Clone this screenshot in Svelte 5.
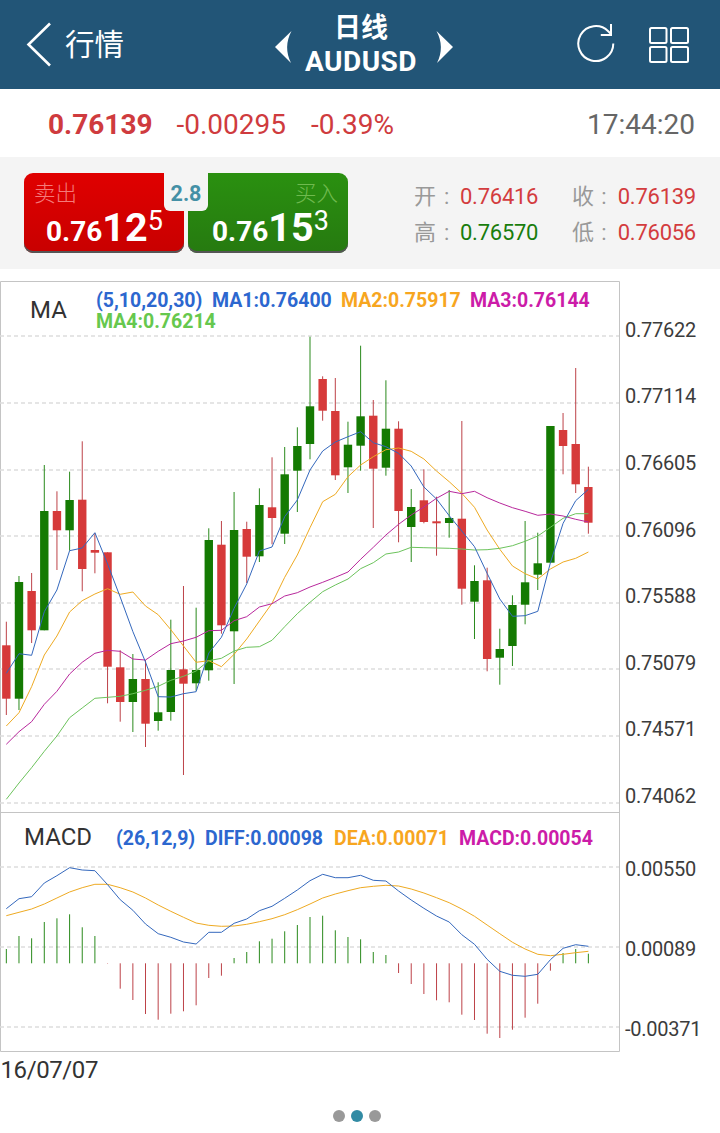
<script>
  const quotes = [
    { label: "开", value: "0.76416", up: false },
    { label: "收", value: "0.76139", up: false },
    { label: "高", value: "0.76570", up: true },
    { label: "低", value: "0.76056", up: false },
  ];

  // --- Chart geometry, y is counted from the top of the page
  const top = 281;
  const zero = 963.3;
  const xAt = (i) => 6.33 + i * 12.653;

  // label, grid line, text baseline
  const priceAxis = [
    ["0.77622", 336, 337],
    ["0.77114", 403, 403],
    ["0.76605", 470, 470],
    ["0.76096", 536, 537],
    ["0.75588", 603, 603],
    ["0.75079", 669, 670],
    ["0.74571", 736, 736],
    ["0.74062", 803, 803],
  ];
  const macdAxis = [
    ["0.00550", 867, 876],
    ["0.00089", 947, 956],
    ["-0.00371", 1027, 1036],
  ];

  // high, body top, body bottom, low, 1 = rising
  const candles = [
    [621.7, 645.3, 698.7, 715, 0],
    [576, 582, 698.7, 710, 1],
    [573, 591, 630.3, 643, 0],
    [465, 511, 630.3, 630.3, 1],
    [491.3, 511, 530.3, 570, 0],
    [471.7, 500, 530.3, 550.7, 1],
    [441.3, 499.7, 569, 591.3, 0],
    [533, 550, 552.7, 573.3, 0],
    [552.3, 552.3, 666.7, 703.3, 0],
    [650.3, 667.3, 702, 721.7, 0],
    [654, 679, 702, 732, 1],
    [660, 679, 723.7, 747, 0],
    [682.3, 712.3, 721, 730.7, 1],
    [619.7, 670, 712, 720.7, 1],
    [586, 669.3, 683.7, 775, 0],
    [607.7, 670, 683.3, 690.7, 1],
    [528.3, 540, 670.3, 680.7, 1],
    [521, 544.7, 625.3, 633.7, 0],
    [492, 530, 631.3, 684, 1],
    [521.7, 529, 556.7, 583, 0],
    [488.3, 505, 556.3, 562, 1],
    [457.3, 507.3, 518, 544.3, 0],
    [447, 474.3, 533.7, 544, 1],
    [427.3, 446, 470.7, 512, 1],
    [336.7, 406.3, 444, 459.3, 1],
    [376.3, 379, 410.7, 420.7, 0],
    [378, 411, 475.3, 480, 0],
    [421.7, 444.7, 467.3, 493, 1],
    [345.7, 416.3, 445.7, 470.7, 1],
    [400, 415.7, 468.7, 528, 0],
    [380.3, 428.7, 467.7, 475.7, 1],
    [421.3, 428.7, 511, 542.3, 0],
    [489, 507, 527, 562, 1],
    [469.3, 500.3, 522, 523.3, 0],
    [496.7, 521.3, 523.3, 555.7, 0],
    [490, 518, 523, 537.7, 1],
    [421, 518.7, 588.7, 604.7, 0],
    [565.3, 581, 601.7, 639, 1],
    [567.7, 580.3, 659, 671.3, 0],
    [628.7, 649, 657.7, 684.7, 1],
    [595.3, 605, 646, 666, 1],
    [521, 582.3, 604.7, 624.3, 1],
    [532.7, 563.3, 574.7, 590, 1],
    [426, 426, 562.7, 562.7, 1],
    [413, 430, 446, 474.3, 0],
    [368, 444, 484.3, 493, 0],
    [466.7, 487, 522.7, 533.7, 0],
  ];

  const ma1 = [673.3, 653.7, 655.3, 611.7, 590, 550.7, 548, 532.7, 564, 597, 631.7, 662, 696.7, 697, 693.7, 691.7, 653, 637.3, 608.3, 584, 551, 547, 516.7, 500, 470, 451, 442, 436.7, 431.7, 442.7, 446.7, 453.3, 466, 487, 499, 515.7, 531, 546.7, 573.3, 599, 616.3, 615.7, 611.3, 562.7, 523.3, 500.7, 489.3];
  const ma2 = [726, 712.7, 686.7, 655, 636, 612, 600.7, 594, 588.7, 594.3, 592, 606, 614.7, 629.7, 646, 662.3, 660.7, 666.7, 654.3, 639, 621, 603.3, 577.3, 555, 527.7, 501.7, 494.3, 476.7, 465, 456.7, 449.7, 448, 451.3, 459, 471, 481.7, 493.3, 507.3, 530, 549.3, 566, 573.7, 579, 569, 562, 558.3, 552];
  const ma3 = [744.3, 731.7, 721.7, 704.3, 691.3, 674, 662.3, 653.3, 650.3, 651.3, 659, 660, 651.3, 643.7, 641, 637.3, 630.7, 630.3, 620.7, 616.7, 607, 603.7, 596, 592.7, 587, 582.3, 577.3, 572, 559.3, 547.3, 535, 524.3, 515, 507, 498.3, 491.3, 493.7, 491.3, 497.7, 503, 507.7, 511.3, 515.3, 514, 516, 519.3, 522];
  const ma4 = [799.3, 783, 767.7, 751.3, 736, 717.7, 708, 698.3, 697.3, 696.3, 693.7, 690.3, 686.3, 680.3, 676.3, 671, 660.7, 658.3, 651, 647.3, 646.7, 640.3, 626.7, 613.7, 602.3, 591.7, 585, 579, 568.7, 562.7, 554, 552, 547.3, 547.7, 548, 548.3, 549, 550, 549.7, 548.3, 545.7, 541.3, 536, 527.3, 518.3, 513.7, 513.7];

  const diff = [908.7, 898.7, 896.7, 883, 875.7, 867.7, 870, 870.7, 884.7, 899.7, 910.3, 924, 933.7, 937.3, 942, 944, 932.3, 932.3, 923.3, 919, 910.7, 906.3, 898.3, 890, 880.7, 874.3, 877.7, 877.7, 875.3, 880.3, 881, 891, 900, 908.3, 916, 922, 934.7, 944.3, 959.3, 971.3, 975.3, 976.3, 974.3, 959.7, 948.3, 944.7, 946.3];
  const dea = [915.7, 912.3, 909, 904, 898, 892, 887.7, 884.3, 884.3, 887.7, 892, 898, 905, 911.3, 917.3, 923, 925.3, 926.3, 926, 924.3, 921.7, 918.7, 914.7, 909.7, 904, 898, 894, 890.7, 887.7, 886.3, 885.3, 886, 889, 893, 897.7, 902.7, 909, 916.3, 925, 933.7, 942.3, 949, 954.3, 955.7, 954.3, 952.7, 951.3];
  const bars = [949, 936, 938.3, 922, 918.3, 914.3, 927.3, 936, 963.7, 988.7, 1000, 1014, 1019.7, 1013.7, 1011.3, 1005.3, 978, 975.7, 958, 952, 941.3, 938.7, 931.3, 925, 917, 915.7, 930.3, 937, 939.3, 952, 955, 973, 984, 994, 1000.3, 1002.3, 1014.7, 1020, 1033.7, 1038, 1029.7, 1017.7, 1003.7, 970.7, 953, 949, 953.7];

  const lines = [
    { name: "orange", data: ma2 },
    { name: "magenta", data: ma3 },
    { name: "lime", data: ma4 },
    { name: "blue", data: ma1 },
    { name: "orange", data: dea },
    { name: "blue", data: diff },
  ];

  function toPoints(values) {
    return values.map((v, i) => `${xAt(i).toFixed(1)},${v}`).join(" ");
  }
</script>

<div class="page">
  <header>
    <div class="back">
      <svg width="26" height="46" viewBox="0 0 26 46">
        <path d="M24 1.5 L2.5 22.5 L24 43.5" fill="none" stroke="#fff" stroke-width="2.6" />
      </svg>
      <span>行情</span>
    </div>
    <div class="symbol">
      <svg width="18" height="34" viewBox="0 0 18 34">
        <path d="M16.5 1 L0 17 L16 33 Q8 17 16.5 1Z" fill="#fff" />
      </svg>
      <div class="title">
        <div>日线</div>
        <div class="code">AUDUSD</div>
      </div>
      <svg width="18" height="34" viewBox="0 0 18 34">
        <path d="M1.5 1 L18 17 L2 33 Q10 17 1.5 1Z" fill="#fff" />
      </svg>
    </div>
    <div class="tools">
      <svg width="38" height="40" viewBox="0 0 38 40">
        <g fill="none" stroke="#fff" stroke-width="2">
          <path d="M36.3 20.5 A17.5 17.5 0 1 1 31.2 8.2 L34 11" />
          <path d="M34 1 V12 H23.8" />
        </g>
      </svg>
      <svg width="40" height="36" viewBox="0 0 40 36">
        <g fill="none" stroke="#fff" stroke-width="2">
          <rect x="1" y="1" width="16.5" height="15" rx="1.5" />
          <rect x="22" y="1" width="17" height="15" rx="1.5" />
          <rect x="1" y="20" width="16.5" height="15" rx="1.5" />
          <rect x="22" y="20" width="17" height="15" rx="1.5" />
        </g>
      </svg>
    </div>
  </header>

  <section class="summary">
    <b>0.76139</b>
    <span class="change">-0.00295</span>
    <span class="percent">-0.39%</span>
    <time>17:44:20</time>
  </section>

  <section class="trade">
    <div class="buttons">
      <div class="order sell">
        <div class="side">卖出</div>
        <div class="price">0.76<big>12</big><sup>5</sup></div>
      </div>
      <div class="order buy">
        <div class="side">买入</div>
        <div class="price">0.76<big>15</big><sup>3</sup></div>
      </div>
      <div class="spread">2.8</div>
    </div>
    <div class="quotes">
      {#each quotes as q}
        <div class="quote">
          <span class="name">{q.label}</span>
          <span class="colon">:</span>
          <span class:up={q.up} class="value">{q.value}</span>
        </div>
      {/each}
    </div>
  </section>

  <svg class="chart" width="720" height="810" viewBox="0 {top - 1} 720 810">
    <!-- frame -->
    <path class="frame" d="M0.5 281.5 H619.5 V1051.5 H0.5 Z M0.5 812.5 H619.5" />
    {#each [...priceAxis, ...macdAxis] as [label, y, base]}
      <line class="grid" x1="0" x2="619" y1={y} y2={y} />
      <text class="axis" x="625" y={base}>{label}</text>
    {/each}

    <!-- candles -->
    {#each candles as [high, bodyTop, bodyBottom, low, up], i}
      <g class={up ? "rise" : "fall"}>
        <line x1={xAt(i)} x2={xAt(i)} y1={high} y2={low} />
        <rect x={xAt(i) - 4.2} y={bodyTop} width="8.4" height={bodyBottom - bodyTop} />
      </g>
    {/each}

    <!-- macd bars -->
    {#each bars as tip, i}
      <g class={tip < zero ? "rise" : "fall"}>
        <line x1={xAt(i)} x2={xAt(i)} y1={zero} y2={tip} />
      </g>
    {/each}

    {#each lines as line}
      <polyline class="line {line.name}" points={toPoints(line.data)} />
    {/each}

    <!-- legends -->
    <text class="name" x="30" y="318">MA</text>
    <g class="legend">
      <text class="blue" x="96" y="307">(5,10,20,30)</text>
      <text class="blue" x="212" y="307">MA1:0.76400</text>
      <text class="orange" x="341" y="307">MA2:0.75917</text>
      <text class="magenta" x="470" y="307">MA3:0.76144</text>
      <text class="lime" x="96" y="328">MA4:0.76214</text>
    </g>
    <text class="name" x="24" y="845">MACD</text>
    <g class="legend">
      <text class="blue" x="116" y="845">(26,12,9)</text>
      <text class="blue" x="205" y="845">DIFF:0.00098</text>
      <text class="orange" x="334" y="845">DEA:0.00071</text>
      <text class="magenta" x="459" y="845">MACD:0.00054</text>
    </g>
    <text class="name date" x="0.5" y="1078">16/07/07</text>
  </svg>

  <div class="dots">
    <i></i>
    <i class="active"></i>
    <i></i>
  </div>
</div>

<style>
  :global(body) {
    margin: 0;
    background: #fff;
  }

  .page {
    width: 720px;
    height: 1133px;
    overflow: hidden;
    font-family: Roboto, "Noto Sans CJK SC", sans-serif;
    color: #333;
  }

  header {
    display: grid;
    grid-template-columns: 275px 178px 1fr;
    align-items: center;
    height: 89px;
    background: #225577;
    color: #fff;
  }

  .back {
    display: flex;
    align-items: center;
    gap: 13px;
    padding-left: 26px;
    font-size: 29.5px;
    line-height: 46px;
  }

  .symbol {
    display: flex;
    align-items: center;
    justify-content: space-between;
  }

  .symbol svg {
    margin-top: 4px;
  }

  .title {
    padding-top: 1px;
    margin: 0 -1px 0 -7px;
    font-size: 27px;
    font-weight: 700;
    line-height: 33px;
    text-align: center;
  }

  .code {
    font-size: 28px;
    letter-spacing: 0.5px;
  }

  .tools {
    display: flex;
    align-items: center;
    justify-content: flex-end;
    gap: 34px;
    padding-right: 31px;
  }

  .tools svg:first-child {
    margin-bottom: 3px;
  }

  .summary {
    display: flex;
    align-items: center;
    height: 68px;
    padding: 2px 25px 0 48px;
    box-sizing: border-box;
    font-size: 28px;
    color: #cf3b3e;
  }

  .change {
    margin-left: 24px;
  }

  .percent {
    margin-left: 25px;
  }

  time {
    margin-left: auto;
    color: #666;
  }

  .trade {
    display: flex;
    height: 112px;
    padding: 16px 24px;
    box-sizing: border-box;
    background: #f4f4f4;
  }

  .buttons {
    position: relative;
    display: flex;
    gap: 4px;
    height: 80px;
  }

  .order {
    display: flex;
    flex-direction: column;
    width: 160px;
    height: 80px;
    box-sizing: border-box;
    border-radius: 9px;
    box-shadow: inset 0 -2px 0 #555;
    color: #fff;
  }

  .sell {
    background: linear-gradient(#e00000, #c80000);
  }

  .buy {
    background: linear-gradient(#2a9010, #267a10);
  }

  .side {
    height: 37px;
    padding: 5px 10px 0;
    box-sizing: border-box;
    font-size: 21.5px;
    line-height: 32px;
    font-weight: 300;
  }

  .sell .side {
    color: #f47a7a;
  }

  .buy .side {
    color: #6fba4e;
    text-align: right;
  }

  .price {
    display: flex;
    align-items: baseline;
    padding-left: 22px;
    font-size: 28px;
    font-weight: 700;
    line-height: 36px;
  }

  .buy .price {
    padding-left: 24px;
  }

  .price big {
    font-size: 39.5px;
    line-height: 36px;
  }

  .price sup {
    align-self: flex-start;
    margin-top: -7px;
    font-size: 27px;
    font-weight: 400;
    line-height: 36px;
  }

  /* sits over the seam between both buttons */
  .spread {
    position: absolute;
    top: 0;
    left: 140px;
    width: 44px;
    height: 38px;
    border-radius: 0 0 6px 6px;
    background: #f4f4f4;
    color: #4490a6;
    font-size: 21.5px;
    font-weight: 700;
    line-height: 41px;
    text-align: center;
  }

  .quotes {
    display: grid;
    grid-template-columns: 158px 124px;
    grid-auto-rows: 36px;
    margin: 6px 0 0 66px;
  }

  .quote {
    display: flex;
    font-size: 22px;
    line-height: 36px;
    color: #999;
  }

  .name {
    width: 30px;
  }

  .colon {
    width: 16px;
  }

  .value {
    color: #d33c3e;
    letter-spacing: -0.25px;
  }

  .quote:nth-child(even) .value {
    margin-left: 1px;
  }

  .value.up {
    color: #197d0c;
  }

  .chart {
    display: block;
    margin-top: 11px;
  }

  .frame {
    fill: none;
    stroke: #c4c4c4;
  }

  .grid {
    stroke: #ddd;
    stroke-width: 1.4;
    stroke-dasharray: 4 3;
  }

  .axis {
    font-size: 20px;
    letter-spacing: -0.25px;
    fill: #3c3c3c;
  }

  .chart .name {
    font-size: 24px;
    fill: #333;
  }

  .chart .date {
    letter-spacing: -0.4px;
  }

  .rise line {
    stroke: #2a8a1c;
  }

  .rise rect {
    fill: #147a02;
  }

  .fall line {
    stroke: #bd4248;
  }

  .fall rect {
    fill: #d63a3a;
  }

  .line {
    fill: none;
    stroke-width: 1;
  }

  .line.blue {
    stroke: #3468bd;
  }

  .line.orange {
    stroke: #eeaa22;
  }

  .line.magenta {
    stroke: #b8289c;
  }

  .line.lime {
    stroke: #6cc35c;
  }

  .legend {
    font-size: 19.5px;
    font-weight: 700;
  }

  .legend .blue {
    fill: #2c67cf;
  }

  .legend .orange {
    fill: #f7a61f;
  }

  .legend .magenta {
    fill: #cc1ca8;
  }

  .legend .lime {
    fill: #66c84e;
  }

  .dots {
    display: flex;
    justify-content: center;
    gap: 6px;
    margin-top: 20px;
    padding-right: 6px;
  }

  .dots i {
    width: 12px;
    height: 12px;
    border-radius: 50%;
    background: #999;
  }

  .dots .active {
    background: #328ba4;
  }
</style>
